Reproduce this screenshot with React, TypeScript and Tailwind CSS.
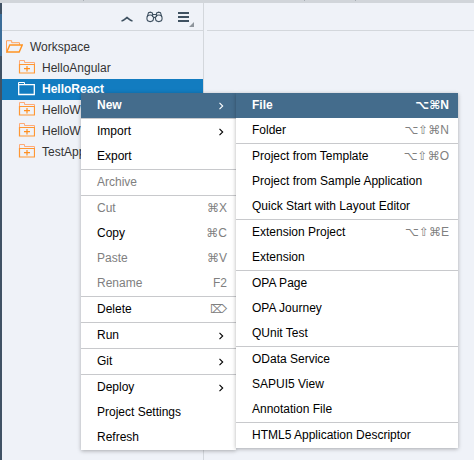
import React from "react";

type Item = {
  label: string;
  shortcut?: string;
  submenu?: boolean;
  disabled?: boolean;
  active?: boolean;
};

const contextMenu: Item[][] = [
  [{ label: "New", submenu: true, active: true }],
  [{ label: "Import", submenu: true }, { label: "Export" }],
  [{ label: "Archive", disabled: true }],
  [
    { label: "Cut", shortcut: "⌘X", disabled: true },
    { label: "Copy", shortcut: "⌘C" },
    { label: "Paste", shortcut: "⌘V", disabled: true },
    { label: "Rename", shortcut: "F2", disabled: true },
  ],
  [{ label: "Delete", shortcut: "⌦" }],
  [{ label: "Run", submenu: true }],
  [{ label: "Git", submenu: true }],
  [{ label: "Deploy", submenu: true }, { label: "Project Settings" }, { label: "Refresh" }],
];

const newMenu: Item[][] = [
  [
    { label: "File", shortcut: "⌥⌘N", active: true },
    { label: "Folder", shortcut: "⌥⇧⌘N" },
  ],
  [
    { label: "Project from Template", shortcut: "⌥⇧⌘O" },
    { label: "Project from Sample Application" },
    { label: "Quick Start with Layout Editor" },
  ],
  [{ label: "Extension Project", shortcut: "⌥⇧⌘E" }, { label: "Extension" }],
  [{ label: "OPA Page" }, { label: "OPA Journey" }, { label: "QUnit Test" }],
  [{ label: "OData Service" }, { label: "SAPUI5 View" }, { label: "Annotation File" }],
  [{ label: "HTML5 Application Descriptor" }],
];

const projects = [
  { name: "HelloAngular" },
  { name: "HelloReact", selected: true },
  { name: "HelloW" },
  { name: "HelloW" },
  { name: "TestApp" },
];

function MenuRow({ item }: { item: Item }) {
  const tone = item.active
    ? "bg-[#446c8c] font-bold text-white"
    : item.disabled
      ? "text-[#808080]"
      : "text-black";
  return (
    <button
      type="button"
      role="menuitem"
      disabled={item.disabled}
      aria-haspopup={item.submenu ? "menu" : undefined}
      className={`flex h-[25px] w-full items-center justify-between pr-[9px] pb-[2px] pl-4 text-left whitespace-nowrap ${tone}`}
    >
      <span>{item.label}</span>
      {item.shortcut && (
        <span className={item.active ? "text-white" : "text-[#808080]"}>{item.shortcut}</span>
      )}
      {item.submenu && (
        <svg className="mt-[2px] mr-[3px]" width="6" height="8" viewBox="0 0 6 8" fill="none" stroke="currentColor" strokeWidth="1.1">
          <path d="M1.500 .8l3.200 3.200-3.200 3.200" />
        </svg>
      )}
    </button>
  );
}

function Menu({ groups, label, className }: { groups: Item[][]; label: string; className: string }) {
  return (
    <div
      role="menu"
      aria-label={label}
      className={`absolute divide-y divide-[#c8c9cc] bg-white shadow-[0_1px_4px_rgba(0,0,0,0.3)] ${className}`}
    >
      {groups.map((group, i) => (
        <div key={i} role="group">
          {group.map((item) => (
            <MenuRow key={item.label} item={item} />
          ))}
        </div>
      ))}
    </div>
  );
}

function ProjectIcon({ selected }: { selected?: boolean }) {
  return (
    <svg width="17" height="15" viewBox="0 0 17 15" fill="none">
      {selected ? (
        <g stroke="#fff">
          <path d="M.5 4V1.500h6v2" />
          <path d="M.7 3.700h15.600v9.800H.7z" strokeWidth="1.300" />
        </g>
      ) : (
        <g>
          <path d="M1.500 4V.5h5v2h10V4" stroke="#ffab78" />
          <path d="M1.500 4.500h15v8.500h-15z" stroke="#ff9733" strokeWidth="1.200" />
          <path d="M9 6v5.500M6 8.700h6" stroke="#ff8f1f" strokeWidth="1.200" />
        </g>
      )}
    </svg>
  );
}

export default function App() {
  return (
    <div className="relative flex min-h-screen flex-col bg-[#eff2f8] font-['Liberation_Sans','DejaVu_Sans',sans-serif] text-[12px] leading-[14px] text-[#333]">
      <div className="flex h-[3px] shrink-0 bg-[#d1d5da]">
        <div className="h-px w-[84px] border-r border-[#a9afb6]" />
        <div className="h-px w-[221px] border-r border-[#a9afb6]" />
        <div className="h-px w-[51px] border-r border-[#a9afb6]" />
      </div>
      <div className="flex flex-1">
        <div className="flex w-[2px] shrink-0 flex-col bg-[#405265]">
          <div className="mt-[11px] h-[42px] bg-[#3b6d99]" />
        </div>
        <aside className="flex w-[202px] shrink-0 flex-col border-r border-[#d3d7dc]">
          <div className="flex h-7 items-center justify-end border-b border-[#d3d7dc] pr-[9px] text-[#3f5161]">
            <button type="button" aria-label="Collapse all" className="mr-3 pt-1">
              <svg width="14" height="8" viewBox="0 0 14 8" fill="none" stroke="currentColor" strokeWidth="1.6">
                <path d="M1.500 6C4 5.500 5.500 3.500 7 2.500 8.500 3.500 10 5.500 12.500 6" />
              </svg>
            </button>
            <button type="button" aria-label="Search" className="mr-[14px]">
              <svg width="17" height="12" viewBox="0 0 17 12" fill="none" stroke="currentColor" strokeWidth="1.1">
                <circle cx="4.200" cy="7.300" r="3.300" />
                <circle cx="12.800" cy="7.300" r="3.300" />
                <path d="M1.200 6L2.500 1.700 4.500 1.200 6.500 2v4M15.800 6L14.500 1.700 12.500 1.200 10.500 2v4M6.500 3.500h4M7.500 7c.6-.8 1.400-.8 2 0" />
              </svg>
            </button>
            <button type="button" aria-label="Menu" className="pt-1">
              <svg width="17" height="17" viewBox="0 0 17 17" fill="currentColor">
                <path d="M1 2h11v2H1zM1 6h11v2H1zM1 10h11v2H1z" />
                <path d="M17 12v5h-5z" fill="#8e959c" />
              </svg>
            </button>
          </div>
          <ul role="tree" className="pt-1.5">
            <li role="treeitem" aria-expanded="true">
              <div className="flex h-[21px] items-center gap-[7px] pb-[2px] pl-1">
                <svg width="17" height="13" viewBox="0 0 17 13" fill="none" stroke="#ff9422">
                  <path d="M.5 11.500V.7h5.200v2h7.800v2.200" stroke="#ffa35c" />
                  <path d="M.8 12L3.800 5h12.400l-3 7z" strokeWidth="1.400" />
                </svg>
                <span>Workspace</span>
              </div>
              <ul role="group">
                {projects.map((p, i) => (
                  <li
                    key={i}
                    role="treeitem"
                    aria-selected={!!p.selected}
                    className={`flex h-[21px] items-center gap-[7px] pb-[2px] pl-4 ${p.selected ? "bg-[#127cc0] font-bold text-white" : ""}`}
                  >
                    <ProjectIcon selected={p.selected} />
                    <span>{p.name}</span>
                  </li>
                ))}
              </ul>
            </li>
          </ul>
        </aside>
        <main className="ml-[3px] flex-1">
          <div className="h-7 border-b border-[#d3d7dc]" />
        </main>
      </div>
      <Menu groups={contextMenu} label="Project actions" className="top-[93px] left-[81px] w-[155px]" />
      <Menu groups={newMenu} label="New" className="top-[93px] left-[236px] w-[222px]" />
    </div>
  );
}
